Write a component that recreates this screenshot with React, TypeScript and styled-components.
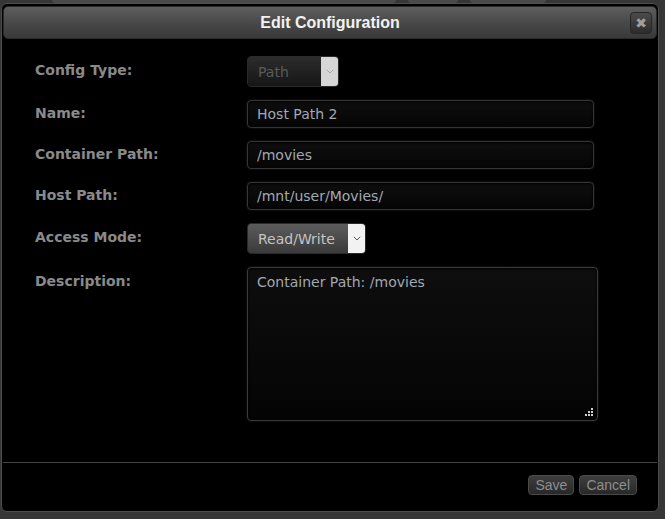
import styled, { createGlobalStyle } from 'styled-components';

const GlobalStyle = createGlobalStyle`
  html, body {
    margin: 0;
    padding: 0;
    background: #363636;
  }
  * {
    box-sizing: border-box;
  }
`;

const Page = styled.div`
  width: 665px;
  height: 519px;
  overflow: hidden;
  display: flex;
  flex-direction: column;
`;

const BackdropTabs = styled.div`
  display: flex;
  height: 3px;
  padding-left: 52px;
  gap: 12px;
`;

const BackdropTab = styled.div<{ $w: number }>`
  width: ${(p) => p.$w}px;
  height: 3px;
  background: #4a4a4a;
  border-radius: 0 0 3px 3px;
`;

const Dialog = styled.div`
  width: 658px;
  height: 509px;
  margin-left: 1px;
  display: flex;
  flex-direction: column;
  background: #000;
  border: 1px solid #4e4e4e;
  border-radius: 6px;
  padding: 1px;
`;

const TitleBar = styled.div`
  height: 33px;
  display: grid;
  grid-template-columns: 1fr auto 1fr;
  align-items: center;
  background: linear-gradient(to bottom, #5e5e5e 0%, #474747 55%, #393939 100%);
  border: 1px solid #2a2a2a;
  border-radius: 5px;
  margin-top: 1px;
`;

const Title = styled.div`
  grid-column: 2;
  font-family: 'Liberation Sans', Arial, sans-serif;
  font-weight: bold;
  font-size: 16px;
  color: #f2f2f2;
`;

const CloseButton = styled.button`
  grid-column: 3;
  justify-self: end;
  margin-right: 4px;
  width: 22px;
  height: 22px;
  padding: 0;
  display: flex;
  align-items: center;
  justify-content: center;
  background: linear-gradient(to bottom, #4c4c4c, #2c2c2c);
  border: 1px solid #262626;
  border-radius: 4px;
  color: #a0a0a0;
  font-family: 'DejaVu Sans', sans-serif;
  font-size: 14px;
  line-height: 1;
`;

const Body = styled.div`
  flex: 1;
  padding: 17px 0 0 32px;
`;

const Form = styled.div`
  display: grid;
  grid-template-columns: 212px auto;
  row-gap: 13px;
  align-items: start;
`;

const Label = styled.div<{ $pt: number }>`
  padding-top: ${(p) => p.$pt}px;
  font-family: 'DejaVu Sans', Verdana, sans-serif;
  font-weight: bold;
  font-size: 14px;
  line-height: 17px;
  color: #8a8a8a;
`;

const fieldText = `
  font-family: 'DejaVu Sans', Verdana, sans-serif;
  font-size: 14px;
  color: #a0a9b2;
`;

const TextField = styled.input`
  ${fieldText}
  display: block;
  width: 347px;
  height: 28px;
  padding: 0 9px;
  background: linear-gradient(to bottom, #0e0e0e, #050505);
  border: 1px solid #353535;
  border-radius: 4px;
  box-shadow: inset 0 1px 3px #000, 0 0 2px #262626;
  outline: none;
  caret-color: #c8c8c8;
`;

const TextAreaWrap = styled.div`
  position: relative;
  width: 351px;
  height: 154px;
`;

const TextArea = styled.textarea`
  ${fieldText}
  display: block;
  width: 100%;
  height: 100%;
  resize: none;
  padding: 6px 9px;
  line-height: 17px;
  background: linear-gradient(to bottom, #0e0e0e, #040404);
  border: 1px solid #3a3a3a;
  border-radius: 4px;
  box-shadow: inset 0 1px 3px #000, 0 0 2px #262626;
  outline: none;
`;

const Grip = styled.svg`
  position: absolute;
  right: 4px;
  bottom: 4px;
`;

const SelectBox = styled.div<{ $variant: 'disabled' | 'normal' }>`
  display: flex;
  height: 31px;
  border-radius: 4px;
  overflow: hidden;
  border: 1px solid #2a2a2a;
  width: ${(p) => (p.$variant === 'disabled' ? 92 : 119)}px;
`;

const SelectValue = styled.div<{ $variant: 'disabled' | 'normal' }>`
  flex: 1;
  display: flex;
  align-items: center;
  padding-left: 10px;
  font-family: 'DejaVu Sans', Verdana, sans-serif;
  font-size: 14px;
  color: ${(p) => (p.$variant === 'disabled' ? '#5a5a5a' : '#c4c4c4')};
  background: ${(p) =>
    p.$variant === 'disabled'
      ? 'linear-gradient(to bottom, #2c2c2c, #161616)'
      : 'linear-gradient(to bottom, #5c5c5c, #3a3a3a)'};
`;

const SelectArrow = styled.div<{ $variant: 'disabled' | 'normal' }>`
  width: 17px;
  display: flex;
  align-items: center;
  justify-content: center;
  background: ${(p) => (p.$variant === 'disabled' ? '#d6d6d6' : '#f2f2f2')};
  color: ${(p) => (p.$variant === 'disabled' ? '#a8a8a8' : '#555')};
`;

const Divider = styled.div`
  height: 1px;
  background: #444;
`;

const Footer = styled.div`
  height: 47px;
  display: flex;
  justify-content: flex-end;
  align-items: flex-start;
  gap: 5px;
  padding: 12px 20px 0 0;
`;

const FooterButton = styled.button`
  height: 20px;
  padding: 0 6px;
  font-family: 'Liberation Sans', Arial, sans-serif;
  font-size: 14px;
  line-height: 18px;
  color: #8e8e8e;
  background: linear-gradient(to bottom, #3e3e3e, #282828);
  border: 1px solid #4a4a4a;
  border-radius: 4px;
`;

const Chevron = () => (
  <svg width="8" height="5" viewBox="0 0 8 5">
    <path d="M0.8 0.8 L4 4 L7.2 0.8" fill="none" stroke="currentColor" strokeWidth="1" />
  </svg>
);

const Select: React.FC<{ value: string; variant: 'disabled' | 'normal' }> = ({ value, variant }) => (
  <SelectBox $variant={variant}>
    <SelectValue $variant={variant}>{value}</SelectValue>
    <SelectArrow $variant={variant}>
      <Chevron />
    </SelectArrow>
  </SelectBox>
);

export default function App() {
  return (
    <>
      <GlobalStyle />
      <Page>
        <BackdropTabs>
          <BackdropTab $w={344} />
          <BackdropTab $w={50} />
          <BackdropTab $w={76} />
        </BackdropTabs>
        <Dialog>
          <TitleBar>
            <Title>Edit Configuration</Title>
            <CloseButton>✖</CloseButton>
          </TitleBar>
          <Body>
            <Form>
              <Label $pt={6}>Config Type:</Label>
              <Select value="Path" variant="disabled" />

              <Label $pt={5}>Name:</Label>
              <TextField defaultValue="Host Path 2" autoFocus />

              <Label $pt={5}>Container Path:</Label>
              <TextField defaultValue="/movies" />

              <Label $pt={5}>Host Path:</Label>
              <TextField defaultValue="/mnt/user/Movies/" />

              <Label $pt={6}>Access Mode:</Label>
              <Select value="Read/Write" variant="normal" />

              <Label $pt={6}>Description:</Label>
              <TextAreaWrap>
                <TextArea defaultValue="Container Path: /movies" />
                <Grip width="9" height="9" viewBox="0 0 9 9">
                  <rect x="6" y="0" width="2" height="2" fill="#cfcfcf" />
                  <rect x="3" y="3" width="2" height="2" fill="#cfcfcf" />
                  <rect x="6" y="3" width="2" height="2" fill="#cfcfcf" />
                  <rect x="0" y="6" width="2" height="2" fill="#cfcfcf" />
                  <rect x="3" y="6" width="2" height="2" fill="#cfcfcf" />
                  <rect x="6" y="6" width="2" height="2" fill="#cfcfcf" />
                </Grip>
              </TextAreaWrap>
            </Form>
          </Body>
          <Divider />
          <Footer>
            <FooterButton>Save</FooterButton>
            <FooterButton>Cancel</FooterButton>
          </Footer>
        </Dialog>
      </Page>
    </>
  );
}
